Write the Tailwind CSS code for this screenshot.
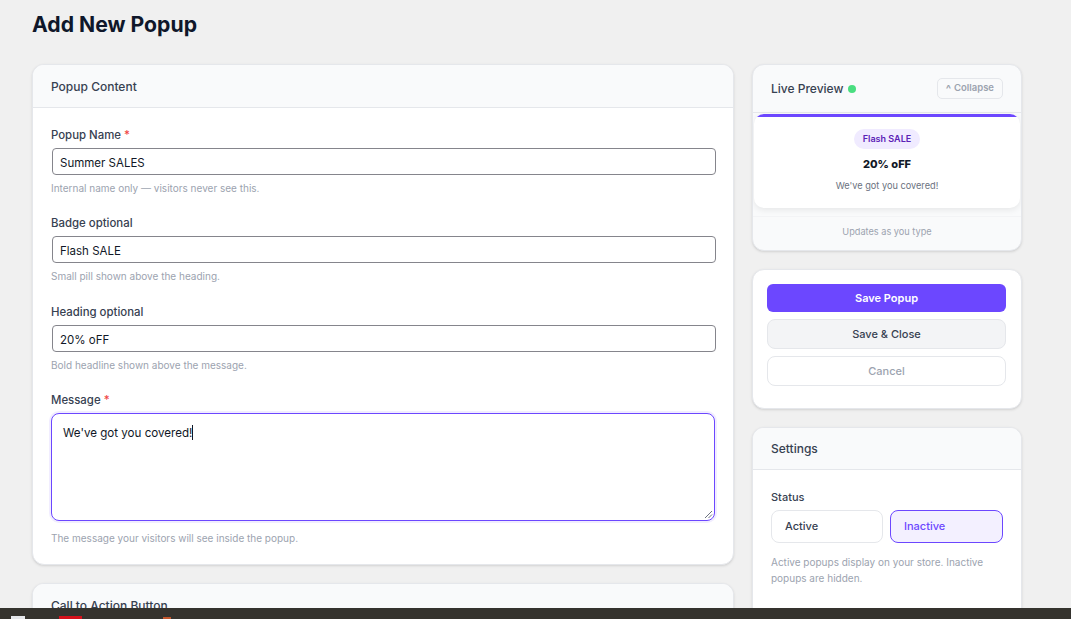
<!DOCTYPE html>
<html lang="en">
<head>
    <meta charset="UTF-8">
    <title>Add New Popup</title>
    <script src="https://cdn.jsdelivr.net/npm/@tailwindcss/browser@4"></script>
</head>
<body class="h-[619px] overflow-hidden bg-[#f0f0f0] font-['Inter',sans-serif] text-[#111827] relative">
    <div class="pl-[32px] pt-[10px]">
        <h1 class="text-[21.2px] leading-[28px] font-bold text-[#0f172a] mb-[26px]">Add New Popup</h1>

        <div class="flex items-start gap-[18px]">
            <!-- Left column -->
            <div class="w-[702px] flex flex-col gap-[18px]">
                <div class="bg-white rounded-[12px] border border-[#e5e7eb] shadow-sm overflow-hidden">
                    <div class="h-[43px] px-[18px] pt-px flex items-center bg-[#f9fafb] border-b border-[#e5e7eb] text-[12px] font-medium text-[#374151]">Popup Content</div>
                    <div class="px-[18px] pt-[19px] pb-[19px]">
                        <label class="block text-[11.4px] leading-[16px] font-medium text-[#374151] mb-[5px]">Popup Name <span class="text-[#ef4444]">*</span></label>
                        <input value="Summer SALES" class="block w-[664px] h-[27px] ml-px px-[7px] pt-[2px] text-[11.5px] text-[#111827] bg-white border border-[#85858c] rounded-[4px]">
                        <p class="text-[10px] leading-[14px] text-[#9ca3af] mt-[6px] mb-[20px]">Internal name only — visitors never see this.</p>

                        <label class="block text-[11.4px] leading-[16px] font-medium text-[#374151] mb-[5px]">Badge optional</label>
                        <input value="Flash SALE" class="block w-[664px] h-[27px] ml-px px-[7px] pt-[2px] text-[11.5px] text-[#111827] bg-white border border-[#85858c] rounded-[4px]">
                        <p class="text-[10px] leading-[14px] text-[#9ca3af] mt-[6px] mb-[21px]">Small pill shown above the heading.</p>

                        <label class="block text-[11.4px] leading-[16px] font-medium text-[#374151] mb-[5px]">Heading optional</label>
                        <input value="20% oFF" class="block w-[664px] h-[27px] ml-px px-[7px] pt-[2px] text-[11.5px] text-[#111827] bg-white border border-[#85858c] rounded-[4px]">
                        <p class="text-[10px] leading-[14px] text-[#9ca3af] mt-[6px] mb-[20px]">Bold headline shown above the message.</p>

                        <label class="block text-[11.4px] leading-[16px] font-medium text-[#374151] mb-[5px]">Message <span class="text-[#ef4444]">*</span></label>
                        <div class="relative w-[664px] h-[108px] rounded-[8px] border border-[#6c47ff] shadow-[0_0_0_2px_#f1edff] bg-white px-[11px] pt-[11px] text-[11.6px] leading-[16px] text-[#111827]">
                            <span>We've got you covered!</span><span class="inline-block w-px h-[15px] bg-[#111827] align-[-3px]"></span>
                            <svg class="absolute right-[1px] bottom-[1px]" width="9" height="9" viewBox="0 0 9 9" fill="none" stroke="#6b7280" stroke-width="1"><path d="M1 8L8 1M4.5 8L8 4.5"/></svg>
                        </div>
                        <p class="text-[10px] leading-[14px] text-[#9ca3af] mt-[10px]">The message your visitors will see inside the popup.</p>
                    </div>
                </div>

                <div class="bg-white rounded-[12px] border border-[#e5e7eb] shadow-sm overflow-hidden">
                    <div class="h-[43px] px-[18px] pt-px flex items-center bg-[#f9fafb] border-b border-[#e5e7eb] text-[12px] font-medium text-[#374151]">Call to Action Button</div>
                </div>
            </div>

            <!-- Right column -->
            <div class="w-[270px] flex flex-col gap-[18px]">
                <div class="bg-[#f9fafb] rounded-[12px] border border-[#e5e7eb] shadow-sm overflow-hidden">
                    <div class="h-[48px] px-[18px] flex items-center justify-between border-b border-[#e5e7eb]">
                        <div class="flex items-center gap-[5px] text-[12px] font-medium text-[#374151]">
                            Live Preview
                            <span class="w-[8px] h-[8px] rounded-full bg-[#4ade80]"></span>
                        </div>
                        <span class="h-[21px] px-[8px] flex items-center gap-[3px] rounded-[5px] border border-[#e5e7eb] text-[9.5px] font-semibold text-[#9ca3af]"><span class="text-[11px] font-bold leading-[21px] h-[21px] -mb-[2px]">^</span>Collapse</span>
                    </div>
                    <div class="pt-px pb-[8px]">
                        <div class="mx-px bg-white rounded-[10px] overflow-hidden shadow-[0_2px_6px_rgba(0,0,0,0.08)] h-[94px] flex flex-col items-center">
                            <div class="w-full h-[3px] bg-[#6c47ff] mb-[12px]"></div>
                            <span class="h-[20px] px-[9px] flex items-center rounded-full bg-[#f0ebff] text-[9px] font-semibold text-[#5b21b6]">Flash SALE</span>
                            <span class="mt-[7px] text-[11px] leading-[16px] font-extrabold text-[#111827]">20% oFF</span>
                            <span class="mt-[7px] text-[9.2px] leading-[14px] text-[#6b7280]">We've got you covered!</span>
                        </div>
                    </div>
                    <div class="h-[34px] pb-[4px] border-t border-[#f3f4f6] flex items-center justify-center text-[9.2px] text-[#9ca3af]">Updates as you type</div>
                </div>

                <div class="bg-white rounded-[12px] border border-[#e5e7eb] shadow-sm pl-[14px] pr-[15px] pt-[14px] pb-[22px] flex flex-col gap-[7px]">
                    <button class="h-[28px] rounded-[6px] bg-[#6c47ff] text-white text-[11px] font-semibold">Save Popup</button>
                    <button class="h-[30px] rounded-[8px] bg-[#f3f4f6] border border-[#e5e7eb] text-[#374151] text-[11px] font-medium">Save &amp; Close</button>
                    <button class="h-[30px] rounded-[8px] bg-white border border-[#e5e7eb] text-[#9ca3af] text-[11px] font-medium">Cancel</button>
                </div>

                <div class="bg-white rounded-[12px] border border-[#e5e7eb] shadow-sm overflow-hidden">
                    <div class="h-[42px] px-[18px] flex items-center bg-[#f9fafb] border-b border-[#e5e7eb] text-[12px] font-medium text-[#374151]">Settings</div>
                    <div class="px-[18px] pt-[20px] pb-[40px]">
                        <div class="text-[11px] leading-[14px] font-medium text-[#374151] mb-[6px]">Status</div>
                        <div class="flex gap-[7px]">
                            <div class="w-[112px] h-[33px] px-[13px] flex items-center rounded-[8px] border border-[#e5e7eb] text-[11px] font-medium text-[#374151]">Active</div>
                            <div class="w-[113px] h-[33px] px-[13px] flex items-center rounded-[8px] border border-[#6c47ff] bg-[#f3f0ff] text-[11px] font-medium text-[#6c47ff]">Inactive</div>
                        </div>
                        <p class="mt-[11px] text-[10px] leading-[16px] text-[#9ca3af]">Active popups display on your store. Inactive popups are hidden.</p>
                    </div>
                </div>
            </div>
        </div>
    </div>

    <!-- OS taskbar strip over the bottom of the window -->
    <div class="absolute left-0 right-0 bottom-0 h-[11px] bg-[#35332e] overflow-hidden">
        <span class="absolute left-[11px] top-[8px] w-[14px] h-[3px] bg-[#e5e7eb]"></span>
        <span class="absolute left-[59px] top-[8px] w-[23px] h-[3px] bg-[#d4111b]"></span>
        <span class="absolute left-[163px] top-[9px] w-[8px] h-[2px] bg-[#c2562d]"></span>
    </div>
</body>
</html>
